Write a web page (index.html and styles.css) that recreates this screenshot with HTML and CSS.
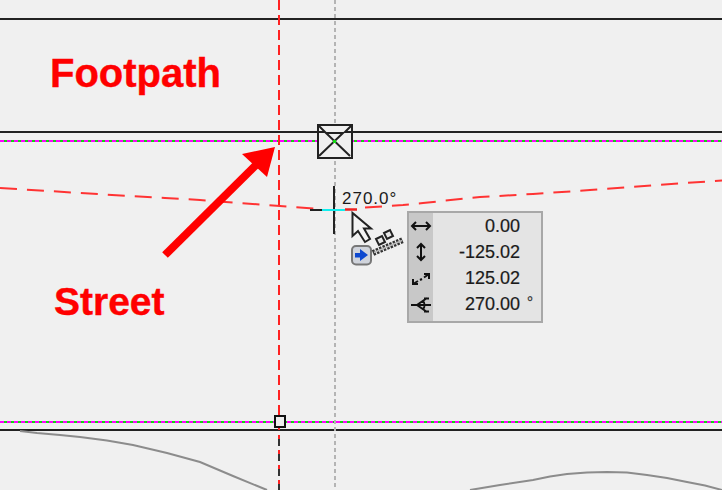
FILE: index.html
```html
<!DOCTYPE html>
<html lang="en">
<head>
    <meta charset="UTF-8">
    <title>Footpath and street drawing</title>
    <link rel="stylesheet" href="styles.css">
</head>
<body>

<div class="canvas">
    <svg class="drawing" width="722" height="490" viewBox="0 0 722 490">
        <!-- kerb lines -->
        <path class="kerb" d="M0 19H722M0 132H317M353 132H722M0 430H722"/>
        <path class="grid-green" d="M0 141H722M0 422H722"/>
        <path class="grid-pink" d="M0 141H722M0 422H722"/>

        <!-- guides -->
        <path class="guide-grey" d="M335 0V490"/>
        <path class="guide-red" d="M279 0V490"/>
        <path class="guide-dark" d="M279 439V490"/>
        <path class="survey" d="M0 188 L80 193 L165 198 L200 200 L280 206 L320 209"/>
        <path class="survey" d="M365 207.500 L403 205 L423 203 L480 197 L533 194 L590 190 L657 185 L722 180.500"/>

        <!-- ground profile -->
        <path class="profile" d="M20 431 L37 433 L60 435 L80 437 L107 440.500 L133 445 L167 453 L200 462 L233 476 L267 490"/>
        <path class="profile" d="M470 490 L500 485 L533 480 L550 476.500 L567 474 L587 472.500 L607 472 L627 472.500 L647 475 L667 478 L687 482 L705 485.500 L722 490"/>

        <!-- pit symbol -->
        <rect class="pit" x="318" y="125" width="34" height="33"/>
        <path class="pit-x" d="M319 156 L343 133 H326 L350 156M318 125 L325 132 L318 132M352 125 L345 132 L352 132"/>
        <rect class="pit-dot" x="333" y="140" width="3" height="3"/>
        <rect class="node" x="275" y="416" width="10" height="11"/>

        <!-- arrow -->
        <path class="arrow-shaft" d="M165 255 L257 164"/>
        <path class="arrow-head" d="M275 147 L242 154 L267 177 Z"/>

        <!-- crosshair -->
        <path class="cross-v" d="M334 186V234"/>
        <path class="cross-dark" d="M310 210H322"/>
        <path class="cross-cyan" d="M322 210H345"/>
        <path class="cross-red" d="M345 209.500H357"/>

        <!-- cursor -->
        <path class="cursor" d="M352.500 213 V236 L358 231 L365 242 L370 239 L364 228.500 L371 228.500 Z"/>

        <!-- snap badge -->
        <rect class="badge" x="352" y="246" width="19" height="18.500" rx="4"/>
        <path class="badge-arrow" d="M355 253 H360 V249 L368 255 L360 261 V257.500 H355 Z"/>

        <!-- ruler hint -->
        <path class="ruler" d="M373 253 L403 240"/>
        <path class="ruler-core" d="M374 252.500 L402 240.500"/>
        <path class="hint" d="M376 239 L382 236 L385 242 L379 245 ZM384 233 L390 230 L393 236 L387 239 Z"/>
    </svg>

    <div class="label label-footpath">Footpath</div>
    <div class="label label-street">Street</div>
    <div class="angle">270.0°</div>

    <div class="readout">
        <div class="readout-row">
            <span class="readout-icon">
                <svg width="22" height="16" viewBox="0 0 22 16"><path d="M2 8H20M6 4L2 8L6 12M16 4L20 8L16 12"/></svg>
            </span>
            <span class="readout-value">0.00</span>
        </div>
        <div class="readout-row">
            <span class="readout-icon">
                <svg width="22" height="20" viewBox="0 0 22 20"><path d="M11 2V18M7 6L11 2L15 6M7 14L11 18L15 14"/></svg>
            </span>
            <span class="readout-value">-125.02</span>
        </div>
        <div class="readout-row">
            <span class="readout-icon">
                <svg width="22" height="16" viewBox="0 0 22 16"><path d="M3 13L8 10M10 9L12 8M14 6.500L19 3M3 8V13H8M14 3H19V8"/></svg>
            </span>
            <span class="readout-value">125.02</span>
        </div>
        <div class="readout-row">
            <span class="readout-icon">
                <svg width="22" height="18" viewBox="0 0 22 18"><path d="M1 9H21M17 2L7 9L17 16M14 2.500H19M14 15.500H19M13 5A6 6 0 0 1 13 13"/></svg>
            </span>
            <span class="readout-value">270.00</span>
            <span class="readout-unit">°</span>
        </div>
    </div>
</div>

</body>
</html>
```

FILE: styles.css
```css
body {
    margin: 0;
    background-color: #f0f0f0;
}
.canvas {
    position: relative;
    width: 722px;
    height: 490px;
    overflow: hidden;
    background-color: #f0f0f0;
    font-family: "Liberation Sans", Arial, sans-serif;
}
.drawing {
    display: block;
    fill: none;
}
.kerb {
    stroke: #222;
    stroke-width: 2;
}
.grid-green {
    stroke: #10d810;
    stroke-width: 2;
}
.grid-pink {
    stroke: #f0f;
    stroke-width: 2;
    stroke-dasharray: 4 3;
}
.guide-grey {
    stroke: #b4b4b4;
    stroke-width: 2;
    stroke-dasharray: 4 3;
}
.guide-red {
    stroke: #f22;
    stroke-width: 2;
    stroke-dasharray: 10 5;
}
.guide-dark {
    stroke: #333;
    stroke-width: 2;
    stroke-dasharray: 7 8;
}
.survey {
    stroke: #f33;
    stroke-width: 2;
    stroke-dasharray: 17 10;
}
.profile {
    stroke: #8c8c8c;
    stroke-width: 2;
}
.pit {
    stroke: #222;
    stroke-width: 2;
    fill: #f0f0f0;
}
.pit-x {
    stroke: #222;
    stroke-width: 2;
}
.pit-dot {
    fill: #10d810;
}
.node {
    stroke: #111;
    stroke-width: 2;
    fill: #eee;
}
.arrow-shaft {
    stroke: #f00;
    stroke-width: 8;
}
.arrow-head {
    fill: #f00;
}
.cross-v {
    stroke: #222;
    stroke-width: 2;
}
.cross-dark {
    stroke: #222;
    stroke-width: 2;
}
.cross-cyan {
    stroke: #1ee;
    stroke-width: 2;
}
.cross-red {
    stroke: #e22;
    stroke-width: 2.500;
}
.cursor {
    fill: #f4f4f4;
    stroke: #222;
    stroke-width: 2;
}
.badge {
    fill: #d0d4dc;
    stroke: #777;
    stroke-width: 2;
}
.badge-arrow {
    fill: #0c48d0;
}
.ruler {
    stroke: #333;
    stroke-width: 6;
    stroke-dasharray: 2.500 1.200;
}
.ruler-core {
    stroke: #bbb;
    stroke-width: 1.500;
}
.hint {
    stroke: #222;
    stroke-width: 2;
    fill: #e8e8e8;
}
.label {
    position: absolute;
    color: #f00;
    font-weight: bold;
    line-height: 45px;
    -webkit-text-stroke: 0.4px #f00;
}
.label-footpath {
    left: 50px;
    top: 51px;
    font-size: 40px;
}
.label-street {
    left: 54px;
    top: 279px;
    font-size: 39px;
}
.angle {
    position: absolute;
    left: 342px;
    top: 189px;
    color: #1a1a1a;
    font-size: 17px;
    line-height: 20px;
    letter-spacing: 1px;
}
.readout {
    position: absolute;
    left: 407px;
    top: 211px;
    box-sizing: border-box;
    width: 136px;
    height: 112px;
    padding-bottom: 3px;
    border: 2px solid #a8a8a8;
    background: linear-gradient(to right, #c8c8c8 24px, #e4e4e4 24px);
    display: grid;
    grid-template-rows: repeat(4, 1fr);
}
.readout-row {
    display: flex;
    align-items: center;
}
.readout-icon {
    flex: none;
    width: 24px;
    display: flex;
    justify-content: center;
}
.readout-icon svg {
    fill: none;
    stroke: #111;
    stroke-width: 2;
}
.readout-value {
    flex: none;
    width: 87px;
    text-align: right;
    color: #1a1a1a;
    font-size: 18px;
    -webkit-text-stroke: 0.2px #1a1a1a;
}
.readout-unit {
    margin-left: 7px;
    padding-bottom: 6px;
    color: #444;
    font-size: 15px;
    font-weight: bold;
}
```
